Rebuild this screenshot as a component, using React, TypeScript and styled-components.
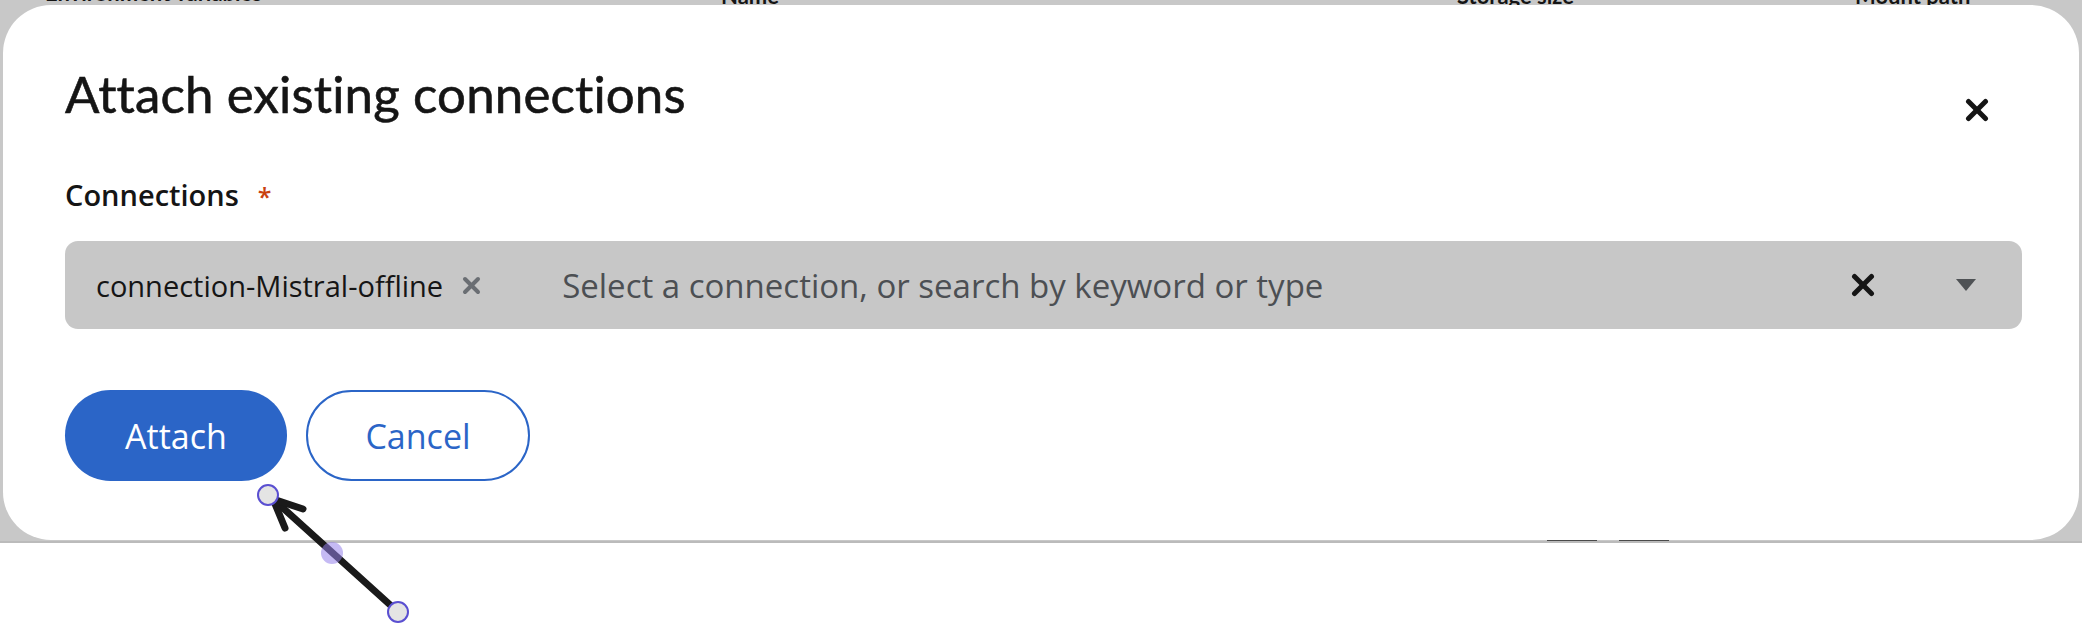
import React from "react";
import styled, { createGlobalStyle } from "styled-components";

const GlobalStyle = createGlobalStyle`
  html, body { margin: 0; padding: 0; background: #ffffff; }
  body { font-family: "Open Sans", "Lato", sans-serif; color: #151515; }
  * { box-sizing: border-box; }
`;

const Page = styled.div`
  position: relative;
  width: 2082px;
  height: 634px;
  overflow: hidden;
  background: #ffffff;
`;

const Backdrop = styled.div`
  position: relative;
  height: 543px;
  background: #c8c8c8;
  border-bottom: 2px solid #bbbbbb;
  padding: 5px 3px 1px 3px;
  display: flex;
  overflow: hidden;
`;

const BehindHeader = styled.div`
  position: absolute;
  top: -16px;
  left: 0;
  right: 0;
  height: 24px;
  font-family: "Lato", sans-serif;
  font-weight: 700;
  font-size: 22px;
  line-height: 24px;
  color: #151515;
`;

const BehindCell = styled.span<{ $left: number; $drop?: number }>`
  position: absolute;
  left: ${(p) => p.$left}px;
  top: ${(p) => -(p.$drop ?? 0)}px;
  white-space: nowrap;
`;

const BehindBar = styled.span<{ $left: number }>`
  position: absolute;
  bottom: 0;
  left: ${(p) => p.$left}px;
  width: 50px;
  height: 3px;
  background: #4a4a4a;
`;

const Modal = styled.div`
  position: relative;
  z-index: 1;
  flex: 1;
  background: #ffffff;
  border-radius: 48px;
  padding: 56px 57px 59px 62px;
  display: flex;
  flex-direction: column;
`;

const Title = styled.h1`
  margin: 0;
  font-family: "Lato", sans-serif;
  font-weight: 400;
  font-size: 51px;
  line-height: 66px;
  color: #151515;
  letter-spacing: 0.15px;
  -webkit-text-stroke: 0.6px #151515;
`;

const CloseButton = styled.button`
  position: absolute;
  top: 81px;
  right: 78px;
  width: 48px;
  height: 48px;
  padding: 0;
  border: none;
  background: transparent;
  display: flex;
  align-items: center;
  justify-content: center;
  cursor: pointer;
`;

const Label = styled.div`
  margin-top: 50px;
  display: flex;
  align-items: baseline;
  gap: 19px;
  font-family: "Open Sans", sans-serif;
  font-weight: 600;
  font-size: 29px;
  line-height: 35px;
  color: #151515;
`;

const Required = styled.span`
  color: #c9410f;
  font-weight: 600;
  font-size: 25px;
`;

const SelectBox = styled.div`
  margin-top: 27px;
  height: 90px;
  border-radius: 13px;
  background: #c7c7c7;
  display: flex;
  align-items: center;
  padding: 0 46px 0 31px;
`;

const Chip = styled.div`
  display: flex;
  align-items: center;
  gap: 19px;
  margin-right: 81px;
`;

const ChipText = styled.span`
  font-family: "Open Sans", sans-serif;
  font-size: 29px;
  color: #151515;
  white-space: nowrap;
`;

const Placeholder = styled.span`
  flex: 1;
  font-family: "Open Sans", sans-serif;
  font-size: 33px;
  color: #4c4f53;
  white-space: nowrap;
`;

const IconSlot = styled.span<{ $ml?: number }>`
  display: inline-flex;
  align-items: center;
  justify-content: center;
  margin-left: ${(p) => p.$ml ?? 0}px;
`;

const Actions = styled.div`
  margin-top: 61px;
  display: flex;
  gap: 19px;
`;

const Button = styled.button<{ $primary?: boolean }>`
  height: 91px;
  width: ${(p) => (p.$primary ? 222 : 224)}px;
  border-radius: 999px;
  font-family: "Open Sans", sans-serif;
  font-size: 34px;
  cursor: pointer;
  background: ${(p) => (p.$primary ? "#2b65c7" : "#ffffff")};
  color: ${(p) => (p.$primary ? "#ffffff" : "#2b65c7")};
  border: ${(p) => (p.$primary ? "none" : "2px solid #2b65c7")};
`;

const Annotation = styled.svg`
  position: absolute;
  inset: 0;
  z-index: 5;
  pointer-events: none;
`;

const TimesIcon = ({ size, color, stroke }: { size: number; color: string; stroke: number }) => (
  <svg width={size} height={size} viewBox={`0 0 ${size} ${size}`}>
    <line x1={stroke / 2 + 1} y1={stroke / 2 + 1} x2={size - stroke / 2 - 1} y2={size - stroke / 2 - 1} stroke={color} strokeWidth={stroke} strokeLinecap="round" />
    <line x1={size - stroke / 2 - 1} y1={stroke / 2 + 1} x2={stroke / 2 + 1} y2={size - stroke / 2 - 1} stroke={color} strokeWidth={stroke} strokeLinecap="round" />
  </svg>
);

const CaretIcon = () => (
  <svg width="20" height="12" viewBox="0 0 20 12">
    <polygon points="0,0 20,0 10,12" fill="#4f5255" />
  </svg>
);

export default function App() {
  return (
    <>
      <GlobalStyle />
      <Page>
        <Backdrop>
          <BehindHeader>
            <BehindCell $left={45} $drop={3}>Environment variables</BehindCell>
            <BehindCell $left={721}>Name</BehindCell>
            <BehindCell $left={1457}>Storage size</BehindCell>
            <BehindCell $left={1855}>Mount path</BehindCell>
          </BehindHeader>
          <BehindBar $left={1547} />
          <BehindBar $left={1619} />
          <Modal>
            <Title>Attach existing connections</Title>
            <CloseButton aria-label="Close">
              <TimesIcon size={24} color="#151515" stroke={5} />
            </CloseButton>
            <Label>
              Connections <Required>*</Required>
            </Label>
            <SelectBox>
              <Chip>
                <ChipText>connection-Mistral-offline</ChipText>
                <TimesIcon size={19} color="#6a6e73" stroke={4} />
              </Chip>
              <Placeholder>Select a connection, or search by keyword or type</Placeholder>
              <IconSlot>
                <TimesIcon size={24} color="#151515" stroke={5} />
              </IconSlot>
              <IconSlot $ml={81}>
                <CaretIcon />
              </IconSlot>
            </SelectBox>
            <Actions>
              <Button $primary>Attach</Button>
              <Button>Cancel</Button>
            </Actions>
          </Modal>
        </Backdrop>
        <Annotation width="2082" height="634" viewBox="0 0 2082 634">
          <line x1="398" y1="612" x2="273" y2="499" stroke="#1a1a1a" strokeWidth="7" strokeLinecap="round" />
          <polyline points="303,509 273,499 285,528" fill="none" stroke="#1a1a1a" strokeWidth="7" strokeLinecap="round" strokeLinejoin="round" />
          <circle cx="268" cy="495" r="10" fill="#e4e4e4" stroke="#5a4fd1" strokeWidth="2" />
          <circle cx="398" cy="612" r="10" fill="#e4e4e4" stroke="#5a4fd1" strokeWidth="2" />
          <circle cx="332" cy="553" r="11" fill="rgba(150,130,235,0.55)" />
        </Annotation>
      </Page>
    </>
  );
}
